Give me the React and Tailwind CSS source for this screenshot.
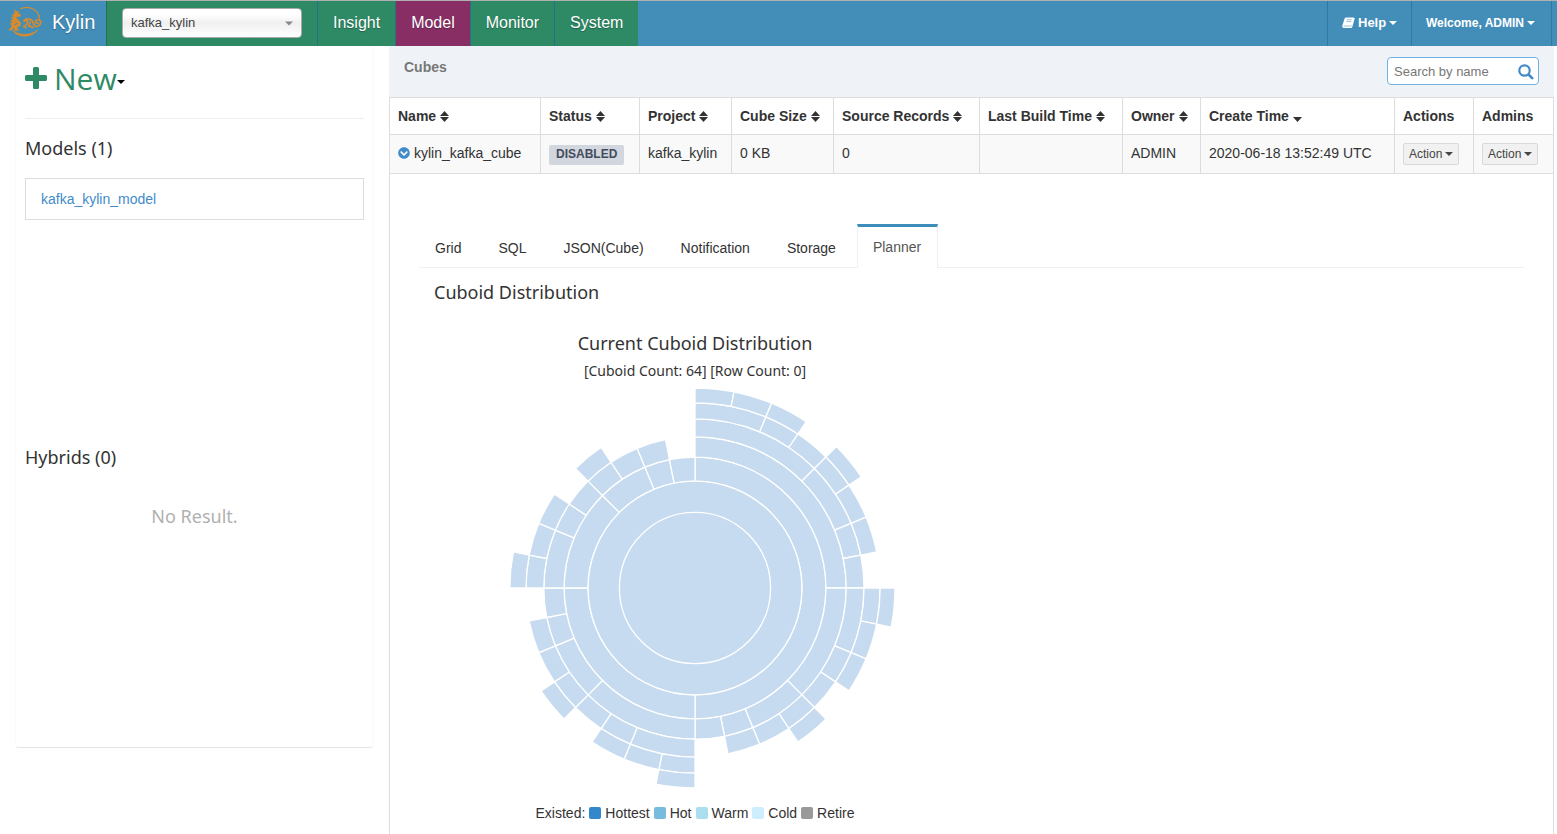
import React, { useState } from 'react';
import { FaChevronCircleDown } from 'react-icons/fa';

const navItems = ['Insight', 'Model', 'Monitor', 'System'];

const tabs = ['Grid', 'SQL', 'JSON(Cube)', 'Notification', 'Storage', 'Planner'];

const columns = [
  { label: 'Name', width: 'w-[151px]', sort: 'both' },
  { label: 'Status', width: 'w-[99px]', sort: 'both' },
  { label: 'Project', width: 'w-[92px]', sort: 'both' },
  { label: 'Cube Size', width: 'w-[102px]', sort: 'both' },
  { label: 'Source Records', width: 'w-[146px]', sort: 'both' },
  { label: 'Last Build Time', width: 'w-[143px]', sort: 'both' },
  { label: 'Owner', width: 'w-[78px]', sort: 'both' },
  { label: 'Create Time', width: 'w-[194px]', sort: 'down' },
  { label: 'Actions', width: 'w-[79px]' },
  { label: 'Admins', width: 'w-[80px]' },
];

const legend = [
  { label: 'Hottest', color: 'bg-[#3388cc]' },
  { label: 'Hot', color: 'bg-[#77bbdd]' },
  { label: 'Warm', color: 'bg-[#aaddee]' },
  { label: 'Cold', color: 'bg-[#cceeff]' },
  { label: 'Retire', color: 'bg-[#999999]' },
];

// Cuboids per ring, [start, end] in 1/32 of a full turn, clockwise from the top
const rings = [
  [[0, 32]],
  [[0, 32]],
  [[0, 16], [16, 24], [24, 28], [28, 30], [30, 31], [31, 32]],
  [
    [0, 8], [8, 12], [12, 14], [14, 15], [15, 16],
    [16, 20], [20, 22], [22, 23], [23, 24],
    [24, 26], [26, 27], [27, 28], [28, 29], [29, 30], [30, 31],
  ],
  [
    [0, 4], [4, 6], [6, 7], [7, 8],
    [8, 10], [10, 11], [11, 12], [12, 13], [13, 14], [14, 15],
    [16, 18], [18, 19], [19, 20], [20, 21], [21, 22], [22, 23],
    [24, 25], [25, 26], [26, 27], [28, 29],
  ],
  [
    [0, 2], [2, 3], [3, 4], [4, 5], [5, 6], [6, 7],
    [8, 9], [9, 10], [10, 11], [12, 13],
    [16, 17], [17, 18], [18, 19], [20, 21],
    [24, 25],
  ],
  [[0, 1], [1, 2], [2, 3], [4, 5], [8, 9], [16, 17]],
];

const RADIUS = 200;

// Every ring covers the same area
const ringRadius = (level) => RADIUS * Math.sqrt(level / rings.length);

const point = (radius, step) => {
  const angle = (step / 32) * 2 * Math.PI;
  return `${radius * Math.sin(angle)},${-radius * Math.cos(angle)}`;
};

const arcPath = (level, start, end) => {
  const inner = ringRadius(level);
  const outer = ringRadius(level + 1);
  const large = end - start > 16 ? 1 : 0;
  return [
    `M${point(outer, start)}`,
    `A${outer},${outer} 0 ${large} 1 ${point(outer, end)}`,
    `L${point(inner, end)}`,
    `A${inner},${inner} 0 ${large} 0 ${point(inner, start)}`,
    'Z',
  ].join(' ');
};

const Sunburst = () => (
  <svg viewBox="-201 -201 402 402" className="block w-[402px] h-[402px]" role="img" aria-label="Current Cuboid Distribution">
    <g fill="#c6dbef" stroke="#fff" strokeWidth="1.3">
      {rings.map((segments, level) =>
        segments.map(([start, end]) =>
          end - start === 32 ? null : (
            <path key={`${level}-${start}`} d={arcPath(level, start, end)} />
          )
        )
      )}
      <circle r={ringRadius(2)} />
      <circle r={ringRadius(1)} />
    </g>
  </svg>
);

const KylinLogo = () => (
  <svg viewBox="0 0 102 90" className="w-[34px] h-[30px]" fill="none" stroke="#d98b2b" strokeLinecap="round" strokeLinejoin="round" aria-hidden="true">
    <path d="M38 5C62 -5 90 6 95 34" strokeWidth="3.5" />
    <path d="M14 71C30 92 68 96 90 68C66 86 40 86 14 71Z" strokeWidth="1.500" fill="#d98b2b" />
    <path d="M20 8L24 14L31 12L30 19L39 23L36 29L28 28L24 34L33 40L39 49L35 58L28 59L27 67L34 69L20 71L18 60L12 69L2 69L9 62L12 53L6 51L13 46L8 41L15 37L10 32L17 29L13 23L20 20Z" strokeWidth="1.500" fill="#d98b2b" />
    <path d="M20 53L29 49" stroke="#438eb9" strokeWidth="3" />
    <path d="M48 42C54 32 72 35 75 46C77 57 84 61 92 56C102 49 99 36 88 38C79 41 82 51 90 48" strokeWidth="5" />
    <path d="M49 41L60 42L56 52L47 59L54 61M67 45L62 57L75 61" strokeWidth="5" />
  </svg>
);

const BookIcon = () => (
  <svg viewBox="0 0 14 13" className="w-[13px] h-3" aria-hidden="true">
    <path d="M4.500 0.500H12.500Q14 0.800 13.600 2.200L11.200 10.500Q10.800 11.900 9.400 11.900H2Q-0.300 11.600 0.300 9.500L2.700 2Q3.200 0.500 4.500 0.500Z" fill="#fff" />
    <path d="M5.300 3H10.600M4.700 5H10M1.800 9.800H9.200Q10 9.800 10.300 8.900" fill="none" stroke="#438eb9" strokeWidth="0.600" />
  </svg>
);

const PlusIcon = () => (
  <svg viewBox="0 0 22 22" className="size-[22px]" fill="currentColor" aria-hidden="true">
    <path d="M9.500 0h3q1.500 0 1.500 1.500V8h6.500q1.500 0 1.500 1.500v3q0 1.500-1.500 1.500H14v6.500q0 1.500-1.500 1.500h-3Q8 22 8 20.500V14H1.500Q0 14 0 12.500v-3Q0 8 1.500 8H8V1.500Q8 0 9.500 0Z" />
  </svg>
);

const SearchIcon = () => (
  <svg viewBox="0 0 16 16" className="size-4 shrink-0" fill="none" stroke="#428bca" strokeLinecap="round" aria-hidden="true">
    <circle cx="6.500" cy="6.500" r="5.200" strokeWidth="2.200" />
    <path d="M11 11L14.200 14.200" strokeWidth="2.600" />
  </svg>
);

const Caret = ({ className }) => (
  <svg viewBox="0 0 8 4" className={className} fill="currentColor" aria-hidden="true">
    <path d="M0 0H8L4 4Z" />
  </svg>
);

const SortIcon = ({ sort }) => {
  if (!sort) return null;
  return (
    <svg viewBox="0 0 9 11" className="inline ml-1 w-[9px] h-[11px] align-[-1px]" fill="currentColor" aria-hidden="true">
      {sort === 'both' && <path d="M0 5L4.500 0L9 5Z" />}
      <path d="M0 6H9L4.500 11Z" />
    </svg>
  );
};

const ActionButton = () => (
  <button type="button" className="flex items-center gap-[3px] h-[22px] px-[5px] rounded-xs border border-[#d9d9d9] bg-[#f1f1f1] text-xs text-[#444]">
    Action
    <Caret className="w-2 h-1" />
  </button>
);

const Header = ({ page, onPage }) => (
  <header className="flex h-[46px] border-t border-[#b0b0b0] bg-[#438eb9] text-white">
    <a href="#home" className="flex items-center gap-[10px] w-[106px] pl-2 pb-1 text-xl [text-shadow:0_1px_1px_rgba(0,0,0,0.3)]">
      <KylinLogo />
      Kylin
    </a>
    <div className="relative w-[211px] border-l border-[#25704f] bg-[#2e8965] pl-[15px] pt-[7px]">
      <select aria-label="Project" className="appearance-none w-[180px] h-[30px] pl-2 rounded border border-[#aaa] bg-linear-to-b from-white from-20% via-[#f0f0f0] via-50% to-white text-[13px] text-[#444]">
        <option>kafka_kylin</option>
      </select>
      <Caret className="absolute right-6 top-5 w-2 h-[5px] text-[#888] pointer-events-none" />
    </div>
    <nav className="flex">
      {navItems.map((item) => (
        <button
          key={item}
          type="button"
          onClick={() => onPage(item)}
          className={`px-[15px] pb-[2px] border-l border-[#2b6f86] text-base [text-shadow:0_1px_1px_rgba(0,0,0,0.3)] ${
            page === item ? 'bg-[#892e65]' : 'bg-[#2e8965]'
          }`}
        >
          {item}
        </button>
      ))}
    </nav>
    <div className="flex ml-auto mr-[5px] border-r border-[#2f7aa3] text-[13px] font-bold [text-shadow:0_1px_1px_rgba(0,0,0,0.3)]">
      <button type="button" className="flex items-center gap-[3px] w-[84px] pl-[14px] pb-[2px] border-l border-[#2f7aa3]">
        <BookIcon />
        Help
        <Caret className="w-2 h-1" />
      </button>
      <button type="button" className="flex items-center gap-[3px] w-[140px] pl-[14px] pb-[2px] border-l border-[#2f7aa3] text-xs">
        Welcome, ADMIN
        <Caret className="w-2 h-1" />
      </button>
    </div>
  </header>
);

const Sidebar = () => (
  <aside className="w-[359px] h-[702px] ml-[15px] shrink-0 px-[9px] rounded-b border-b border-x border-b-[#e5e5e5] border-x-[#fafafa] font-['Noto_Sans',sans-serif] text-[#333]">
    <button type="button" className="flex items-center h-[72px] pb-2 font-['Open_Sans','Noto_Sans',sans-serif] text-[30px] text-[#2e8965]">
      <PlusIcon />
      <span className="ml-[7px]">New</span>
      <Caret className="w-2 h-1 mt-2 text-black" />
    </button>
    <hr className="border-[#eee]" />
    <h3 className="mt-[15px] text-lg leading-7">Models (1)</h3>
    <ul className="h-[265px] mt-4 font-['Liberation_Sans',Arial,sans-serif] text-sm">
      <li className="flex items-center h-[42px] px-[15px] border border-[#ddd]">
        <a href="#kafka_kylin_model" className="text-[#428bca]">kafka_kylin_model</a>
      </li>
    </ul>
    <h3 className="text-lg leading-7">Hybrids (0)</h3>
    <p className="mt-[31px] text-lg leading-7 text-center text-[#b0b0b0]">No Result.</p>
  </aside>
);

const CubeTable = () => (
  <table className="w-full table-fixed border-collapse text-sm text-[#333]">
    <thead>
      <tr className="h-[37px]">
        {columns.map((col) => (
          <th key={col.label} className={`${col.width} px-2 border border-[#ddd] text-left font-bold whitespace-nowrap`}>
            {col.label}
            <SortIcon sort={col.sort} />
          </th>
        ))}
      </tr>
    </thead>
    <tbody>
      <tr className="h-[39px] bg-[#f9f9f9] [&>td]:border [&>td]:border-[#ddd] [&>td]:px-2 [&>td]:whitespace-nowrap">
        <td className="pb-[2px]">
          <FaChevronCircleDown className="inline size-3 mr-1 align-[-1px] text-[#428bca]" />
          kylin_kafka_cube
        </td>
        <td>
          <span className="inline-block h-5 px-[7px] rounded-xs bg-[#d1d6df] text-xs leading-[18px] font-bold text-[#444c5c]">DISABLED</span>
        </td>
        <td className="pb-[2px]">kafka_kylin</td>
        <td className="pb-[2px]">0 KB</td>
        <td className="pb-[2px]">0</td>
        <td></td>
        <td className="pb-[2px]">ADMIN</td>
        <td className="pb-[2px]">2020-06-18 13:52:49 UTC</td>
        <td><ActionButton /></td>
        <td><ActionButton /></td>
      </tr>
    </tbody>
  </table>
);

const App = () => {
  const [page, setPage] = useState('Model');
  const [tab, setTab] = useState('Planner');
  const [search, setSearch] = useState('');

  return (
    <div className="min-h-screen flex flex-col bg-white font-['Liberation_Sans',Arial,sans-serif] text-[#333]">
      <Header page={page} onPage={setPage} />
      <div className="flex flex-1">
        <Sidebar />

        <main className="flex-1 flex flex-col min-w-0 ml-[15px] mr-[3px]">
          {/* Title bar */}
          <div className="flex items-start justify-between h-[51px] pl-[15px] pr-[15px] pt-[11px] bg-[#eff3f8]">
            <h1 className="text-sm font-bold text-[#777]">Cubes</h1>
            <label className="flex items-center w-[152px] h-7 pl-[6px] pr-1 pt-[2px] rounded border border-[#6fb3e0] bg-white">
              <input
                type="text"
                aria-label="Search by name"
                placeholder="Search by name"
                value={search}
                onChange={(e) => setSearch(e.target.value)}
                className="flex-1 min-w-0 text-[13px] outline-none placeholder:text-[#777]"
              />
              <SearchIcon />
            </label>
          </div>

          <CubeTable />

          {/* Cube details */}
          <section className="flex-1 border-x border-[#ddd] px-[29px] pt-[50px]">
            <div className="flex items-end gap-[5px] h-[44px] border-b border-[#f0f0f0] text-sm">
              {tabs.map((name) => (
                <button
                  key={name}
                  type="button"
                  onClick={() => setTab(name)}
                  className={
                    tab === name
                      ? 'h-11 -mb-px pl-[15px] pr-4 pb-[2px] border-t-[3px] border-x border-x-[#f0f0f0] border-t-[#3c8dbc] bg-white text-[#555]'
                      : 'h-[38px] px-4'
                  }
                >
                  {name}
                </button>
              ))}
            </div>
            <div className="px-[15px] font-['Noto_Sans',sans-serif]">
              <h2 className="mt-[10px] text-lg leading-7">Cuboid Distribution</h2>
              <div className="flex flex-col items-center w-[522px] mt-[23px]">
                <h3 className="text-lg leading-7">Current Cuboid Distribution</h3>
                <p className="text-sm leading-7 mb-[2px]">[Cuboid Count: 64] [Row Count: 0]</p>
                <Sunburst />
                <div className="flex items-center gap-1 mt-[14px] font-['Liberation_Sans',Arial,sans-serif] text-sm">
                  <span>Existed:</span>
                  {legend.map((item) => (
                    <span key={item.label} className="flex items-center gap-1">
                      <span className={`w-3 h-3 rounded-xs ${item.color}`}></span>
                      {item.label}
                    </span>
                  ))}
                </div>
              </div>
            </div>
          </section>
        </main>
      </div>
    </div>
  );
};

export default App;
